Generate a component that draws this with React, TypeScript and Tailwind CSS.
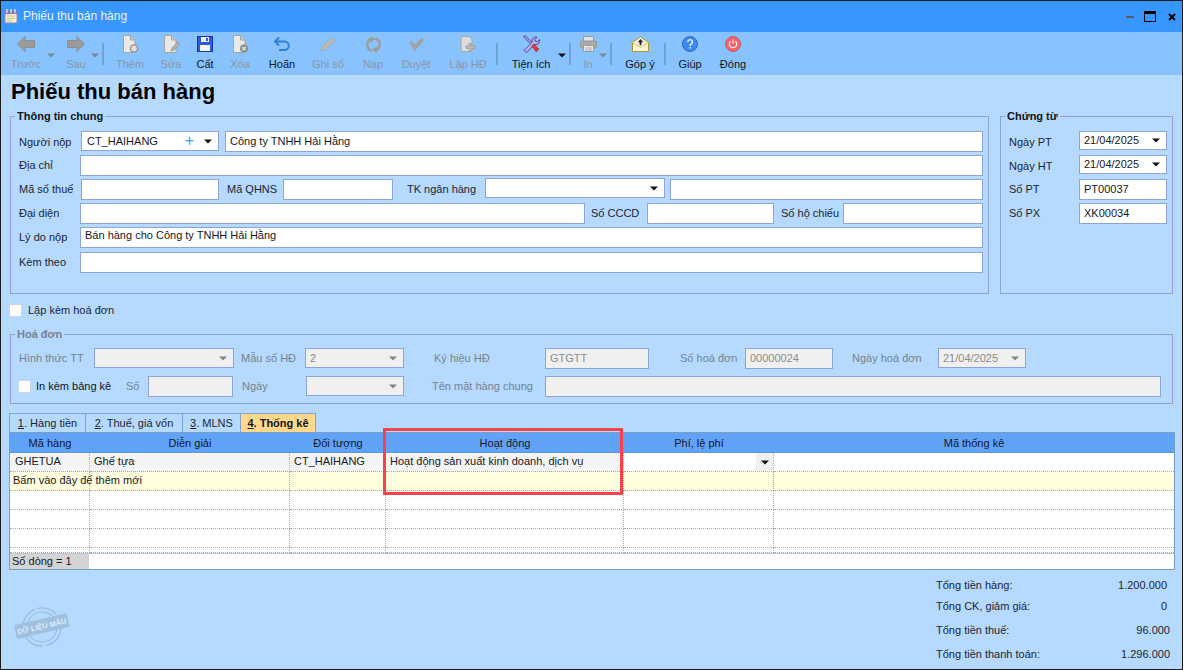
import React from "react";

const Caret = ({ gray = false }: { gray?: boolean }) => (
  <svg width="8" height="5" viewBox="0 0 8 5" className="block shrink-0">
    <polygon points="0,0.5 8,0.5 4,4.5" fill={gray ? "#7b8790" : "#111"} />
  </svg>
);

const G = "#9a9c9e";
const Doc = ({ children }: { children?: React.ReactNode }) => (
  <svg width="18" height="18" viewBox="0 0 18 18">
    <path d="M2.5 .5h7l4.5 4.5v12.5h-11.5z" fill="#e9e9e7" stroke="#a4a4a4" />
    <path d="M9.5 .5v4.5h4.5" fill="#c9c9c9" stroke="#a4a4a4" />
    {children}
  </svg>
);
const icons: Record<string, React.ReactNode> = {
  left: (
    <svg width="18" height="16" viewBox="0 0 18 16"><polygon points="0.5,8 8,0.5 8,4.5 17.5,4.5 17.5,11.5 8,11.5 8,15.5" fill="#9a9c9c" stroke="#8d8f8f" /></svg>
  ),
  right: (
    <svg width="18" height="16" viewBox="0 0 18 16"><polygon points="17.5,8 10,0.5 10,4.5 0.5,4.5 0.5,11.5 10,11.5 10,15.5" fill="#9a9c9c" stroke="#8d8f8f" /></svg>
  ),
  them: (
    <Doc><circle cx="13" cy="13.5" r="3.6" fill="#dedede" stroke="#8f8f8f" strokeWidth="1.4" /></Doc>
  ),
  sua: (
    <Doc><path d="M9 16l1-3 6-6 2 2-6 6z" fill="#b5b5b5" stroke="#8f8f8f" strokeWidth=".8" /></Doc>
  ),
  cat: (
    <svg width="16" height="16" viewBox="0 0 16 16">
      <rect x=".5" y=".5" width="15" height="15" fill="#2a5be0" stroke="#1534c8" />
      <rect x="4" y="1" width="8" height="5" fill="#e8f0ff" />
      <rect x="9" y="2" width="2" height="3" fill="#2a5be0" />
      <rect x="3" y="9" width="10" height="6" fill="#f5f5f5" />
    </svg>
  ),
  xoa: (
    <Doc>
      <circle cx="13" cy="13.5" r="4" fill="#8b8f92" />
      <path d="M11.3 11.8l3.4 3.4M14.7 11.8l-3.4 3.4" stroke="#eee" strokeWidth="1.2" />
    </Doc>
  ),
  hoan: (
    <svg width="18" height="16" viewBox="0 0 18 16" fill="none" stroke="#2a7ee0" strokeWidth="1.9">
      <path d="M6 1.5L2 5.5l4 4" />
      <path d="M2.5 5.5h9a4 4 0 0 1 0 8.5H6" />
    </svg>
  ),
  ghi: (
    <svg width="16" height="16" viewBox="0 0 16 16">
      <path d="M1 15l1.2-4.5L11.5 1.200l3.300 3.300L5.500 13.800z" fill="#b9bbbc" stroke="#a5a7a8" />
    </svg>
  ),
  nap: (
    <svg width="17" height="17" viewBox="0 0 17 17">
      <path d="M6.500 14.800A6.500 6.500 0 0 1 6 2.900" fill="none" stroke={G} strokeWidth="2.600" />
      <path d="M10.500 2.200A6.500 6.500 0 0 1 11 14.100" fill="none" stroke={G} strokeWidth="2.600" />
      <polygon points="5,0 10.500,3 5,6.800" fill={G} />
      <polygon points="12,17 6.500,14 12,10.200" fill={G} />
    </svg>
  ),
  duyet: (
    <svg width="17" height="15" viewBox="0 0 17 15"><path d="M1 6l2.500-2.500 3.500 4L13.800 0.800 16 3 7 14z" fill="#a0a2a3" /></svg>
  ),
  lap: (
    <svg width="16" height="16" viewBox="0 0 16 16">
      <path d="M1 .5h8l3 3v12h-11z" fill="#dcdcda" stroke="#a8a8a8" />
      <path d="M9 7.500h2.500v2.500h3.500v2.500h-3.500v3h-2.500v-3h-3v-2.500h3z" fill="#bdbdbd" stroke="#999" strokeWidth=".8" />
    </svg>
  ),
  tien: (
    <svg width="18" height="18" viewBox="0 0 18 18">
      <path d="M1.500 1.500l2-1 5.500 6-1.500 1.500z" fill="#a99be6" stroke="#3b2c7c" strokeWidth=".7" />
      <path d="M2.200 15.300l8-8.200a4 4 0 0 1 5-5l-2.400 2.400.6 1.800 1.800.6 2.300-2.400a4 4 0 0 1-5 5l-8 8.200z" fill="#b9aef0" stroke="#3b2c7c" strokeWidth=".8" />
      <path d="M9.800 11l2-2 5 5-2.500 3z" fill="#e23a3a" stroke="#8e1c1c" strokeWidth=".6" />
    </svg>
  ),
  in: (
    <svg width="17" height="16" viewBox="0 0 17 16">
      <rect x="3.500" y=".5" width="10" height="5" fill="#e3e3e3" stroke="#9d9d9d" />
      <rect x=".5" y="5" width="16" height="7" rx="1" fill="#a7a9aa" stroke="#999" />
      <rect x="3.500" y="9.500" width="10" height="6" fill="#eee" stroke="#9d9d9d" />
      <path d="M5 12h7M5 14h7" stroke="#aaa" />
    </svg>
  ),
  gop: (
    <svg width="17" height="16" viewBox="0 0 17 16">
      <path d="M.5 6.500L8.500 .8l8 5.700v9h-16z" fill="#fff7d8" stroke="#b8912f" />
      <path d="M.5 6.500l8 5 8-5" fill="none" stroke="#d9bd6e" />
      <path d="M8.500 3L5.800 6.200h1.800v3h1.800v-3h1.800z" fill="#222" />
    </svg>
  ),
  giup: (
    <svg width="16" height="16" viewBox="0 0 16 16">
      <circle cx="8" cy="8" r="7.500" fill="#3e8bee" stroke="#2f6cc0" />
      <path d="M5.800 6a2.300 2.300 0 1 1 3.500 2c-.9.600-1.300 1-1.300 2" fill="none" stroke="#fff" strokeWidth="1.300" />
      <rect x="7.300" y="11" width="1.400" height="1.500" fill="#fff" />
    </svg>
  ),
  dong: (
    <svg width="16" height="16" viewBox="0 0 16 16">
      <circle cx="8" cy="8" r="7.500" fill="#f0666a" stroke="#d85458" />
      <path d="M5.500 5.300a3.700 3.700 0 1 0 5 0" fill="none" stroke="#fff" strokeWidth="1.100" />
      <path d="M8 3.500v4.300" stroke="#fff" strokeWidth="1.100" />
    </svg>
  ),
};

const Btn = ({ icon, label, cls, off = false }: { icon: string; label: string; cls: string; off?: boolean }) => (
  <div className={`flex flex-col items-center shrink-0 ${cls}`}>
    <div className="h-[20px] flex items-center justify-center">{icons[icon]}</div>
    <div className={`mt-[2px] leading-[16px] whitespace-nowrap ${off ? "text-[#8c969e]" : "text-[#10151c]"}`}>{label}</div>
  </div>
);
const Sep = ({ cls }: { cls: string }) => <div className={`w-[2px] h-[22px] mt-[9px] bg-[#71a0d2] shrink-0 ${cls}`} />;
const ToolCaret = ({ cls, gray = false }: { cls: string; gray?: boolean }) => (
  <div className={`flex justify-center pt-[19px] shrink-0 ${cls}`}><Caret gray={gray} /></div>
);

const Box = ({ cls = "", text = "", off = false, caret = false, plus = false }: { cls?: string; text?: string; off?: boolean; caret?: boolean; plus?: boolean }) => (
  <div className={`flex items-center border border-[#8da3de] pl-[4px] pr-[6px] shrink-0 ${off ? "bg-[#f0f0f0] text-[#8b8b8b]" : "bg-white text-[#14181f]"} ${cls}`}>
    <span className="flex-1 whitespace-nowrap overflow-hidden">{text}</span>
    {plus && <span className="text-[#38a4ee] text-[16px] leading-none mr-[10px]">+</span>}
    {caret && <Caret gray={off} />}
  </div>
);
const Lab = ({ cls, children, off = false }: { cls: string; children: React.ReactNode; off?: boolean }) => (
  <div className={`shrink-0 whitespace-nowrap ${off ? "text-[#75838f]" : "text-[#1c2633]"} ${cls}`}>{children}</div>
);
const Check = ({ cls = "" }: { cls?: string }) => <div className={`w-[13px] h-[13px] bg-white border border-[#c6d6e6] shrink-0 ${cls}`} />;

const Legend = ({ children, off = false }: { children: React.ReactNode; off?: boolean }) => (
  <legend className={`ml-[-4px] px-[2px] h-[14px] leading-[14px] font-bold ${off ? "text-[#75838f]" : "text-[#10151c]"}`}>{children}</legend>
);

const Cell = ({ cls = "", children }: { cls?: string; children?: React.ReactNode }) => (
  <div className={`border-r border-b border-dotted border-[#a9a9a9] flex items-center whitespace-nowrap text-[#14181f] ${cls}`}>{children}</div>
);
const Empty = () => (
  <>
    <Cell /><Cell /><Cell /><Cell /><Cell /><Cell cls="!border-r-0" />
  </>
);

export default function App() {
  return (
    <div className="w-[1183px] h-[670px] overflow-hidden border border-[#1c1c1c] bg-[#b5d9ff] text-[11px] leading-[21px] font-['Liberation_Sans',Arial,sans-serif]">
      {/* title bar */}
      <div className="h-[31px] bg-[#3797ff] flex items-center relative">
        <svg width="14" height="16" viewBox="0 0 14 16" className="ml-[3px] mt-[-1px]">
          <rect x="1" y="3" width="12" height="12" rx="1" fill="#f5f0d0" stroke="#9a86c0" />
          <path d="M1 3h12v3H1z" fill="#8a6fc0" />
          <path d="M3 1v4M7 1v4M11 1v4" stroke="#eee" strokeWidth="1.200" />
          <path d="M3 8h8M3 10.500h8M3 13h5" stroke="#c9c08a" />
        </svg>
        <div className="ml-[5px] text-[#e6f2ff] text-[12px]">Phiếu thu bán hàng</div>
        <div className="ml-auto flex items-center mr-[6px]">
          <div className="w-[8px] h-[2px] bg-[#555c66]" />
          <div className="ml-[10px] w-[12px] h-[11px] border border-black border-t-[3px]" />
          <svg width="8" height="8" viewBox="0 0 8 8" className="ml-[12px]"><path d="M1 1l6 6M7 1l-6 6" stroke="#000" strokeWidth="2" /></svg>
        </div>
      </div>

      {/* toolbar */}
      <div className="h-[43px] bg-[#88c3ff] flex pl-[8px] pt-[2px]">
        <Btn icon="left" label="Trước" cls="w-[34px]" off />
        <ToolCaret cls="w-[16px]" gray />
        <Btn icon="right" label="Sau" cls="w-[30px] ml-[2px]" off />
        <ToolCaret cls="w-[8px]" gray />
        <Sep cls="ml-[3px]" />
        <Btn icon="them" label="Thêm" cls="w-[40px] ml-[6px]" off />
        <Btn icon="sua" label="Sửa" cls="w-[42px]" off />
        <Btn icon="cat" label="Cất" cls="w-[26px]" />
        <Btn icon="xoa" label="Xóa" cls="w-[44px]" off />
        <Btn icon="hoan" label="Hoãn" cls="w-[40px]" />
        <Btn icon="ghi" label="Ghi sổ" cls="w-[52px]" off />
        <Btn icon="nap" label="Nạp" cls="w-[38px]" off />
        <Btn icon="duyet" label="Duyệt" cls="w-[48px]" off />
        <Btn icon="lap" label="Lập HĐ" cls="w-[56px]" off />
        <Sep cls="" />
        <Btn icon="tien" label="Tiện ích" cls="w-[52px] ml-[7px]" />
        <ToolCaret cls="w-[10px]" />
        <Sep cls="ml-[2px]" />
        <Btn icon="in" label="In" cls="w-[20px] ml-[7px]" off />
        <ToolCaret cls="w-[10px]" gray />
        <Sep cls="ml-[2px]" />
        <Btn icon="gop" label="Góp ý" cls="w-[48px] ml-[4px]" />
        <Sep cls="" />
        <Btn icon="giup" label="Giúp" cls="w-[48px]" />
        <Btn icon="dong" label="Đóng" cls="w-[38px]" />
      </div>

      {/* heading */}
      <div className="h-[34px] pl-[10px] pb-[2px] flex items-center font-bold text-[22px] text-black">Phiếu thu bán hàng</div>

      {/* top groups */}
      <div className="flex pl-[9px]">
        <fieldset className="w-[979px] h-[185px] border border-[#8ba3d8] pl-[8px] pr-[5px]">
          <Legend>Thông tin chung</Legend>
          <div className="flex flex-col gap-[3px] pt-[8px]">
            <div className="flex h-[21px]">
              <Lab cls="w-[61px] pt-[1px]">Người nộp</Lab>
              <Box cls="w-[138px] h-[20px] ml-[1px] !pl-[5px]" text="CT_HAIHANG" plus caret />
              <Box cls="flex-1 ml-[6px]" text="Công ty TNHH Hải Hằng" />
            </div>
            <div className="flex h-[21px]">
              <Lab cls="w-[61px]">Địa chỉ</Lab>
              <Box cls="flex-1" />
            </div>
            <div className="flex h-[21px]">
              <Lab cls="w-[61px]">Mã số thuế</Lab>
              <Box cls="w-[138px] ml-[1px]" />
              <Lab cls="w-[56px] ml-[8px]">Mã QHNS</Lab>
              <Box cls="w-[110px]" />
              <Lab cls="w-[78px] ml-[14px]">TK ngân hàng</Lab>
              <Box cls="w-[180px] h-[20px] mt-[-1px]" caret />
              <Box cls="flex-1 ml-[5px]" />
            </div>
            <div className="flex h-[21px]">
              <Lab cls="w-[61px]">Đại diện</Lab>
              <Box cls="w-[505px]" />
              <Lab cls="w-[56px] ml-[6px]">Số CCCD</Lab>
              <Box cls="w-[127px]" />
              <Lab cls="w-[62px] ml-[7px]">Số hộ chiếu</Lab>
              <Box cls="flex-1" />
            </div>
            <div className="flex h-[21px]">
              <Lab cls="w-[61px]">Lý do nộp</Lab>
              <Box cls="flex-1 !items-start leading-[14px]" text="Bán hàng cho Công ty TNHH Hải Hằng" />
            </div>
            <div className="flex h-[21px] mt-[1px]">
              <Lab cls="w-[61px]">Kèm theo</Lab>
              <Box cls="flex-1" />
            </div>
          </div>
        </fieldset>
        <fieldset className="w-[173px] h-[185px] ml-[11px] border border-[#8ba3d8] pl-[8px]">
          <Legend>Chứng từ</Legend>
          <div className="flex flex-col gap-[3px] pt-[8px]">
            <div className="flex h-[21px]"><Lab cls="w-[70px] pt-[1px]">Ngày PT</Lab><Box cls="w-[88px] h-[19px]" text="21/04/2025" caret /></div>
            <div className="flex h-[21px]"><Lab cls="w-[70px] pt-[1px]">Ngày HT</Lab><Box cls="w-[88px] h-[19px]" text="21/04/2025" caret /></div>
            <div className="flex h-[21px]"><Lab cls="w-[70px]">Số PT</Lab><Box cls="w-[88px]" text="PT00037" /></div>
            <div className="flex h-[21px]"><Lab cls="w-[70px]">Số PX</Lab><Box cls="w-[88px]" text="XK00034" /></div>
          </div>
        </fieldset>
      </div>

      {/* check row */}
      <div className="flex items-center h-[13px] mt-[10px] pl-[8px]">
        <Check />
        <div className="ml-[6px] text-[#1c2633]">Lập kèm hoá đơn</div>
      </div>

      {/* invoice group */}
      <fieldset className="ml-[9px] mt-[10px] w-[1163px] h-[77px] border border-[#8ba3d8] pl-[8px] pr-[11px]">
        <Legend off>Hoá đơn</Legend>
        <div className="flex flex-col gap-[7px] pt-[7px]">
          <div className="flex h-[21px]">
            <Lab off cls="w-[75px]">Hình thức TT</Lab>
            <Box off caret cls="w-[140px] h-[20px]" />
            <Lab off cls="w-[64px] ml-[7px]">Mẫu số HĐ</Lab>
            <Box off caret cls="w-[99px] h-[20px]" text="2" />
            <Lab off cls="w-[111px] ml-[30px]">Ký hiệu HĐ</Lab>
            <Box off cls="w-[104px]" text="GTGTT" />
            <Lab off cls="w-[65px] ml-[31px]">Số hoá đơn</Lab>
            <Box off cls="w-[88px]" text="00000024" />
            <Lab off cls="w-[86px] ml-[19px]">Ngày hoá đơn</Lab>
            <Box off caret cls="w-[88px] h-[20px]" text="21/04/2025" />
          </div>
          <div className="flex h-[21px]">
            <div className="w-[108px] flex items-center shrink-0 ml-[-1px]">
              <Check />
              <div className="ml-[5px] text-[#10151c] whitespace-nowrap">In kèm bảng kê</div>
            </div>
            <Lab off cls="w-[22px]">Số</Lab>
            <Box off cls="w-[85px]" />
            <Lab off cls="w-[64px] ml-[9px]">Ngày</Lab>
            <Box off caret cls="w-[98px] h-[20px]" />
            <Lab off cls="w-[113px] ml-[28px]">Tên mặt hàng chung</Lab>
            <Box off cls="flex-1" />
          </div>
        </div>
      </fieldset>

      {/* tabs */}
      <div className="flex h-[19px] mt-[9px] ml-[8px] leading-[19px] text-[#1c2633]">
        <div className="w-[77px] border border-b-0 border-[#7fa6d0] text-center"><u>1</u>. Hàng tiền</div>
        <div className="w-[97px] border border-b-0 border-l-0 border-[#7fa6d0] text-center"><u>2</u>. Thuế, giá vốn</div>
        <div className="w-[58px] border border-b-0 border-l-0 border-[#7fa6d0] text-center"><u>3</u>. MLNS</div>
        <div className="w-[75px] bg-[#ffd88c] border border-b-0 border-l-0 border-[#7fa6d0] text-center font-bold text-[#10151c]"><u>4</u>. Thống kê</div>
      </div>

      {/* grid */}
      <div className="relative ml-[8px] w-[1166px] h-[138px] border border-[#7a9dc4] bg-white flex flex-col">
        <div className="grid grid-cols-[80px_200px_96px_238px_150px_1fr] h-[20px] bg-[#60a2f8] text-[#14181f] text-center leading-[20px] border-b border-[#5b96e0]">
          <div>Mã hàng</div>
          <div>Diễn giải</div>
          <div>Đối tượng</div>
          <div>Hoạt động</div>
          <div>Phí, lệ phí</div>
          <div>Mã thống kê</div>
        </div>
        <div className="grid grid-cols-[80px_200px_96px_238px_150px_1fr] grid-rows-[19px_19px_19px_19px_19px_5px] h-[100px] overflow-hidden">
          <Cell cls="bg-[#f4f4f4] pl-[5px] pb-[2px]">GHETUA</Cell>
          <Cell cls="bg-[#f4f4f4] pl-[4px] pb-[2px]">Ghế tựa</Cell>
          <Cell cls="bg-[#f4f4f4] pl-[4px] pb-[2px]">CT_HAIHANG</Cell>
          <Cell cls="bg-[#f4f4f4] pl-[4px] pb-[2px]">Hoạt động sản xuất kinh doanh, dịch vụ</Cell>
          <Cell cls="justify-end">
            <div className="w-[17px] h-full bg-[#f0f0f0] flex items-center justify-center"><Caret /></div>
          </Cell>
          <Cell cls="!border-r-0" />
          <Cell cls="bg-[#ffffe0] pl-[3px] pb-[2px] relative z-10 overflow-visible">Bấm vào đây để thêm mới</Cell>
          <Cell cls="bg-[#ffffe0]" />
          <Cell cls="bg-[#ffffe0]" />
          <Cell cls="bg-[#ffffe0]" />
          <Cell cls="bg-[#ffffe0]" />
          <Cell cls="bg-[#ffffe0] !border-r-0" />
          <Empty />
          <Empty />
          <Empty />
          <Empty />
        </div>
        <div className="h-[16px] border-t border-[#b9c6d4] flex leading-[15px]">
          <div className="w-[79px] bg-[#d4d4d4] pl-[2px] text-[#14181f]">Số dòng = 1</div>
        </div>
        {/* highlight frame */}
        <div className="absolute left-[373px] top-[-5px] w-[240px] h-[67px] border-[3px] border-[#f4434a] pointer-events-none" />
      </div>

      {/* bottom */}
      <div className="flex">
        <svg width="56" height="46" viewBox="0 0 56 46" className="ml-[13px] mt-[34px] shrink-0">
          <g transform="rotate(-13 28 23)" fill="none" stroke="#9abcdc">
            <circle cx="28" cy="23" r="19" strokeWidth="1.300" strokeDasharray="30 3 20 3" />
            <circle cx="28" cy="23" r="15" strokeWidth="1" />
            <rect x="1" y="15" width="54" height="14" fill="#9fc0de" stroke="none" />
            <text x="28" y="25" textAnchor="middle" fill="#dcecfb" stroke="none" fontSize="7.500" fontWeight="700">DỮ LIỆU MẪU</text>
          </g>
        </svg>
        <div className="ml-auto w-[234px] mr-[12px] mt-[5px] leading-[20px] text-[#1c2633]">
          <div className="flex justify-between pr-[3px]"><span>Tổng tiền hàng:</span><span>1.200.000</span></div>
          <div className="flex justify-between pr-[3px] mt-[1px]"><span>Tổng CK, giảm giá:</span><span>0</span></div>
          <div className="flex justify-between mt-[4px]"><span>Tổng tiền thuế:</span><span>96.000</span></div>
          <div className="flex justify-between mt-[4px]"><span>Tổng tiền thanh toán:</span><span>1.296.000</span></div>
        </div>
      </div>
    </div>
  );
}
